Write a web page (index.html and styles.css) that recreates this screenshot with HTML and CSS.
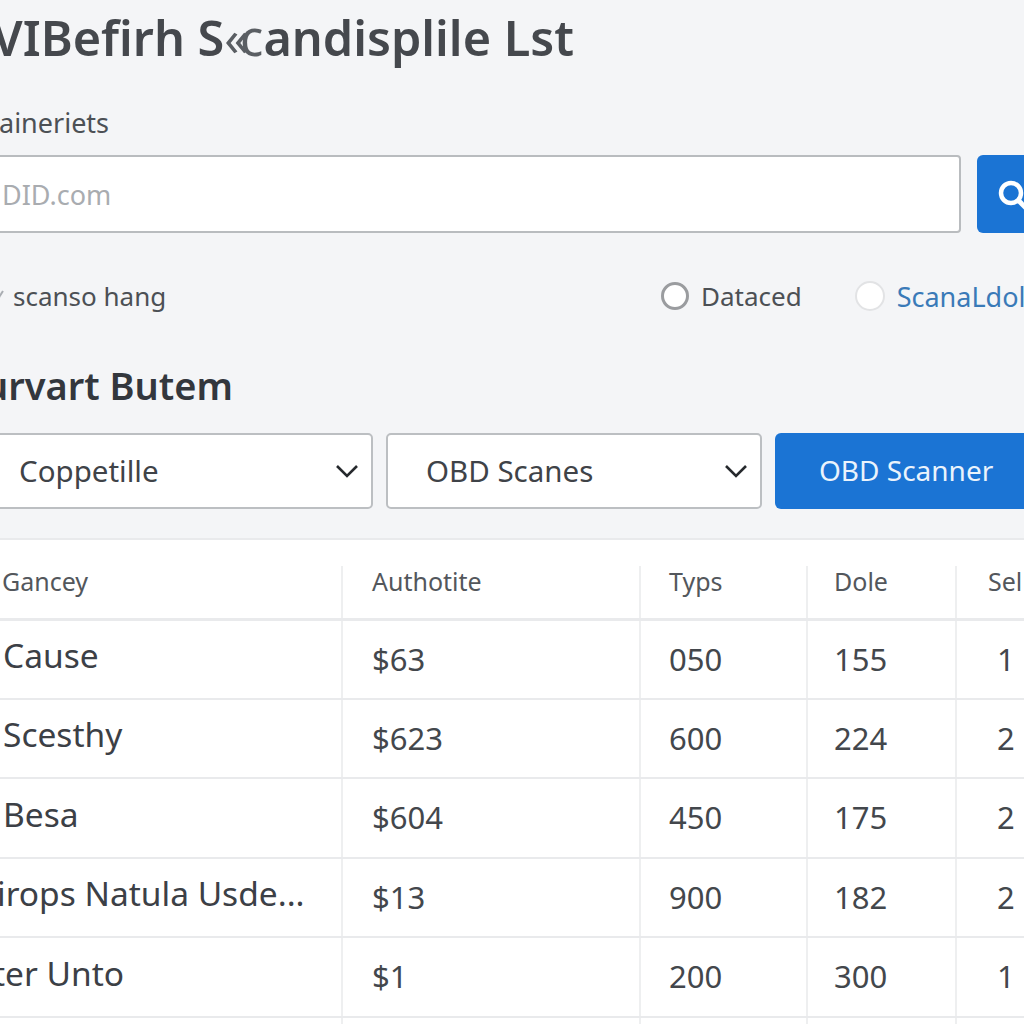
FILE: index.html
```html
<!DOCTYPE html>
<html lang="en">
<head>
  <meta charset="UTF-8">
  <title>Scanner List</title>
  <meta name="viewport" content="width=device-width, initial-scale=1.0"/>
  <link rel="stylesheet" href="styles.css">
</head>
<body>
  <div class="page">
    <h1>VIBefirh S<span class="odd">«c</span>andisplile Lst</h1>
    <div class="label">aineriets</div>

    <div class="search">
      <input class="search-input" type="text" placeholder="DID.com">
      <button class="search-btn" aria-label="Search">
        <svg width="36" height="36" viewBox="0 0 36 36"><circle cx="14" cy="17" r="10" fill="none" stroke="#fff" stroke-width="4.5"/><path d="M21 24l10 10" stroke="#fff" stroke-width="5" fill="none"/></svg>
      </button>
    </div>

    <div class="options">
      <div class="opt-left">
        <svg class="tick" width="28" height="20" viewBox="0 0 28 20"><path d="M20 16L27 5" stroke="#a9adb2" stroke-width="2" fill="none"/></svg>
        <span>scanso hang</span>
      </div>
      <div class="opt-group">
        <span class="radio"></span><span class="opt-text">Dataced</span>
        <span class="radio radio-light"></span><span class="opt-text opt-link">ScanaLdol</span>
      </div>
    </div>

    <h2>urvart Butem</h2>

    <div class="filters">
      <div class="select select-first">
        <span>Coppetille</span>
        <svg width="24" height="14" viewBox="0 0 24 14"><path d="M2 2l10 10L22 2" stroke="#26292d" stroke-width="2.6" fill="none"/></svg>
      </div>
      <div class="select select-second">
        <span>OBD Scanes</span>
        <svg width="24" height="14" viewBox="0 0 24 14"><path d="M2 2l10 10L22 2" stroke="#26292d" stroke-width="2.6" fill="none"/></svg>
      </div>
      <button class="scan-btn"><span>OBD Scanner</span></button>
    </div>

    <div class="table-wrap">
      <table>
        <colgroup>
          <col class="c1"><col class="c2"><col class="c3"><col class="c4"><col class="c5">
        </colgroup>
        <thead>
          <tr><th>Gancey</th><th>Authotite</th><th class="col-typs">Typs</th><th class="col-dole">Dole</th><th class="col-sel">Sel</th></tr>
        </thead>
        <tbody>
          <tr><td class="name">Cause</td><td>$63</td><td class="col-typs">050</td><td class="col-dole">155</td><td class="num">1</td></tr>
          <tr><td class="name">Scesthy</td><td>$623</td><td class="col-typs">600</td><td class="col-dole">224</td><td class="num">2</td></tr>
          <tr><td class="name">Besa</td><td>$604</td><td class="col-typs">450</td><td class="col-dole">175</td><td class="num">2</td></tr>
          <tr><td class="name cut-long">irops Natula Usde...</td><td>$13</td><td class="col-typs">900</td><td class="col-dole">182</td><td class="num">2</td></tr>
          <tr><td class="name cut-short">ter Unto</td><td>$1</td><td class="col-typs">200</td><td class="col-dole">300</td><td class="num">1</td></tr>
          <tr><td></td><td></td><td></td><td></td><td></td></tr>
        </tbody>
      </table>
    </div>
  </div>
</body>
</html>
```

FILE: styles.css
```css
html, body { margin: 0; height: 1024px; overflow: hidden; }
body { background: #f4f5f7; font-family: "Noto Sans", Arial, sans-serif; color: #3c4046; }

/* the shot is cropped at both sides, so the page hangs over the window */
.page { width: 1100px; margin-left: -24px; }

h1 { margin: 0; padding: 4px 0 0 16px; font-size: 48.6px; font-weight: 560; line-height: 66px; color: #45484d; white-space: nowrap; }
.odd { letter-spacing: -9px; font-weight: 400; margin-right: 9px; color: #5a5e63; }

.label { margin-top: 34px; padding-left: 23px; font-size: 27px; line-height: 38px; color: #4c5055; }

.search { display: flex; gap: 16px; margin-top: 13px; height: 78px; }
.search-input { flex: 1; min-width: 0; box-sizing: border-box; padding: 0 0 0 24px; background: #fff; border: 2px solid #b9bcbf; border-radius: 4px; font-family: inherit; font-size: 27px; }
.search-input::placeholder { color: #a9acb0; opacity: 1; }
.search-btn { width: 99px; flex: none; padding: 0 0 0 20px; background: #1b74d4; border: none; border-radius: 6px; display: flex; align-items: center; }

.options { display: flex; justify-content: space-between; align-items: center; height: 40px; margin-top: 43px; font-size: 26px; color: #4c5055; }
.opt-left { display: flex; align-items: center; gap: 9px; }
.tick { flex: none; }
.opt-group { width: 415px; display: flex; align-items: center; }
.radio { width: 28px; height: 28px; flex: none; box-sizing: border-box; background: #fff; border: 3px solid #9a9c9f; border-radius: 50%; margin-right: 12px; }
.radio-light { width: 30px; height: 30px; border: 2px solid #e2e3e5; }
.opt-text { margin-right: 53px; white-space: nowrap; }
.opt-link { margin-right: 0; font-size: 27px; color: #3a7ab8; }

h2 { margin: 0; padding: 0; font-size: 38px; font-weight: 600; line-height: 50px; margin-top: 44px; color: #33373d; white-space: nowrap; text-indent: 8px; }

.filters { display: flex; gap: 13px; height: 76px; margin-top: 23px; }
.select { box-sizing: border-box; display: flex; align-items: center; justify-content: space-between; padding: 0 12px 0 41px; background: #fff; border: 2px solid #bcbfc2; border-radius: 5px; font-size: 29.5px; color: #3f4348; }
.select span { margin-bottom: 2px; }
.select-first { width: 397px; }
.select-second { width: 376px; padding-left: 38px; }
.scan-btn { flex: 1; padding: 0 0 2px 44px; text-align: left; background: #1b74d4; color: #eaf3fc; border: none; border-radius: 6px; font-family: inherit; font-size: 28px; }

.table-wrap { margin-top: 29px; padding-top: 26px; background: #fff; border-top: 2px solid #e9eaec; }
table { border-collapse: collapse; table-layout: fixed; width: 1100px; }
.c1 { width: 366px; } .c2 { width: 298px; } .c3 { width: 167px; } .c4 { width: 149px; }
th, td { padding: 0 0 0 29px; text-align: left; border-right: 2px solid #eeeff0; border-bottom: 2px solid #e9eaec; white-space: nowrap; }
th { height: 53px; padding-bottom: 22px; box-sizing: border-box; font-size: 25px; line-height: 28px; font-weight: 400; color: #53575c; border-bottom-width: 3px; }
td { height: 79.5px; box-sizing: border-box; padding-bottom: 1px; font-size: 31px; color: #43474c; }
th:first-child { padding-left: 26px; }
td.name { padding-left: 27px; padding-bottom: 8px; font-size: 33.5px; color: #3c4046; }
td.cut-long { text-indent: -6px; }
td.cut-short { text-indent: -10px; }
th.col-typs, td.col-typs { padding-left: 28px; }
.col-dole { padding-left: 26px; }
th.col-sel { padding-left: 31px; }
td.num { padding-left: 40px; }
```
